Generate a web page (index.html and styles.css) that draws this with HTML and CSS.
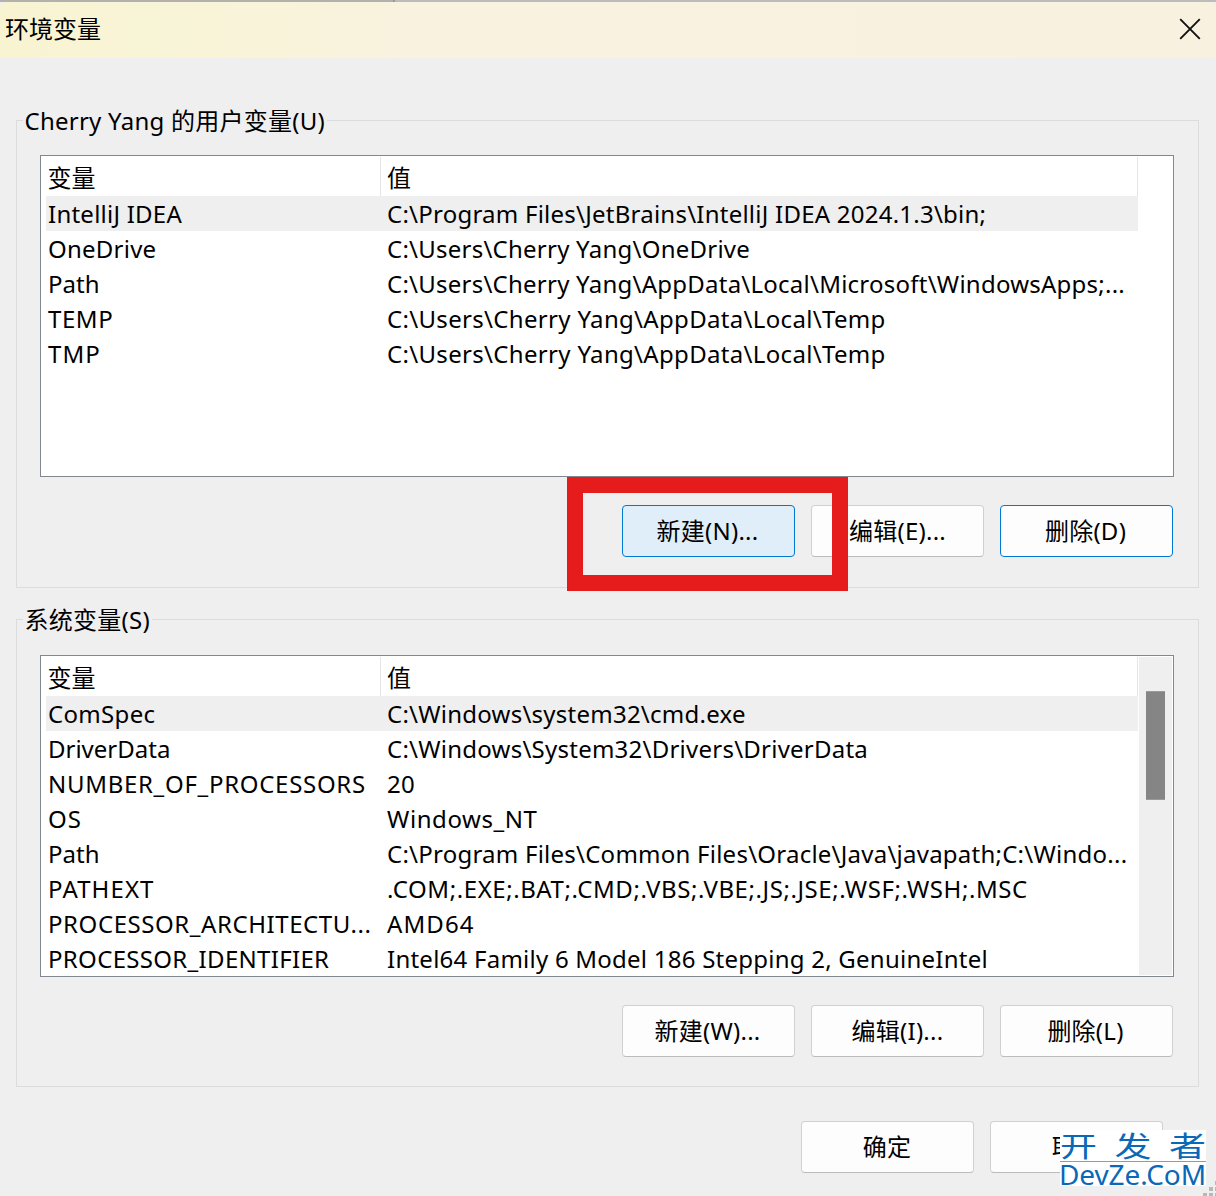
FILE: index.html
```html
<!DOCTYPE html>
<html lang="zh-CN">
<head>
<meta charset="utf-8">
<title>环境变量</title>
<link rel="stylesheet" href="styles.css">
</head>
<body>
<div class="dialog">
  <div class="backdrop-edge"></div>
  <header class="titlebar">
    <h1 class="title">环境变量</h1>
    <svg class="close" width="22" height="22" viewBox="0 0 22 22"><path d="M1.2 1.2 20.8 20.8M20.8 1.2 1.2 20.8" fill="none" stroke="#111" stroke-width="1.9"/></svg>
  </header>
  <main class="content">
    <section class="group">
      <h2 class="legend"><span>Cherry Yang 的用户变量(U)</span></h2>
      <div class="list">
        <div class="table">
          <div class="row head"><span class="name">变量</span><span class="value">值</span></div>
          <div class="row selected"><span class="name">IntelliJ IDEA</span><span class="value">C:\Program Files\JetBrains\IntelliJ IDEA 2024.1.3\bin;</span></div>
          <div class="row"><span class="name">OneDrive</span><span class="value">C:\Users\Cherry Yang\OneDrive</span></div>
          <div class="row"><span class="name tight">Path</span><span class="value">C:\Users\Cherry Yang\AppData\Local\Microsoft\WindowsApps;...</span></div>
          <div class="row"><span class="name caps">TEMP</span><span class="value loose">C:\Users\Cherry Yang\AppData\Local\Temp</span></div>
          <div class="row"><span class="name wide">TMP</span><span class="value loose">C:\Users\Cherry Yang\AppData\Local\Temp</span></div>
        </div>
      </div>
      <div class="actions">
        <button class="button hot">新建(N)...</button>
        <button class="button edit">编辑(E)...</button>
        <button class="button focused">删除(D)</button>
        <div class="highlight"></div>
      </div>
    </section>
    <section class="group system">
      <h2 class="legend"><span>系统变量(S)</span></h2>
      <div class="list">
        <div class="table">
          <div class="row head"><span class="name">变量</span><span class="value">值</span></div>
          <div class="row selected"><span class="name loose">ComSpec</span><span class="value">C:\Windows\system32\cmd.exe</span></div>
          <div class="row"><span class="name tight">DriverData</span><span class="value">C:\Windows\System32\Drivers\DriverData</span></div>
          <div class="row"><span class="name processors">NUMBER_OF_PROCESSORS</span><span class="value">20</span></div>
          <div class="row"><span class="name wide">OS</span><span class="value caps">Windows_NT</span></div>
          <div class="row"><span class="name tight">Path</span><span class="value">C:\Program Files\Common Files\Oracle\Java\javapath;C:\Windo...</span></div>
          <div class="row"><span class="name wide">PATHEXT</span><span class="value caps">.COM;.EXE;.BAT;.CMD;.VBS;.VBE;.JS;.JSE;.WSF;.WSH;.MSC</span></div>
          <div class="row"><span class="name caps">PROCESSOR_ARCHITECTU...</span><span class="value wide">AMD64</span></div>
          <div class="row"><span class="name loose">PROCESSOR_IDENTIFIER</span><span class="value">Intel64 Family 6 Model 186 Stepping 2, GenuineIntel</span></div>
        </div>
        <div class="scrollbar"><div class="thumb"></div></div>
      </div>
      <div class="actions">
        <button class="button">新建(W)...</button>
        <button class="button edit">编辑(I)...</button>
        <button class="button">删除(L)</button>
      </div>
    </section>
  </main>
  <footer class="footer">
    <button class="button">确定</button>
    <button class="button">取消</button>
  </footer>
  <div class="watermark">
    <div class="mark-top"><span>开</span><span>发</span><span>者</span></div>
    <div class="mark-bottom">DevZe.CoM</div>
  </div>
  <svg class="grip" width="13" height="15" viewBox="0 0 13 15"><path d="M12 0h4v4h-4zM6 6h4v4H6zM12 6h4v4h-4zM0 12h4v4H0zM6 12h4v4H6zM12 12h4v4h-4z" fill="#b8b8b8"/></svg>
</div>
</body>
</html>
```
FILE: styles.css
```css
* { box-sizing: border-box; }

body {
  margin: 0;
  font-family: "Noto Sans", "Noto Sans CJK SC", sans-serif;
  font-size: 24px;
  color: #000;
}

.dialog {
  position: relative;
  width: 1216px;
  height: 1196px;
  overflow: hidden;
  background: #efefef;
}

.backdrop-edge {
  height: 2px;
  background: linear-gradient(90deg, #b4b0ae 393px, #999 393px, #999 395px, #bcbcbc 395px);
}

.titlebar {
  display: flex;
  align-items: center;
  justify-content: space-between;
  height: 56px;
  padding: 0 15px 2px 5px;
  border-radius: 6px 6px 0 0;
  background: linear-gradient(90deg, #f8f4d2 0, #f9f4d8 200px, #f9f2df 420px, #f8f1e0 100%);
}

.title { margin: 0; font-size: 24px; font-weight: 400; line-height: 54px; }

.content {
  display: flex;
  flex-direction: column;
  gap: 31px;
  padding: 62px 17px 0 16px;
}

.group {
  height: 468px;
  padding: 0 24px 0 23px;
  border: 1px solid #dcdcdc;
}

.legend {
  display: flex;
  height: 34px;
  margin: 0 0 0 -17px;
  font-size: 24px;
  font-weight: 400;
  line-height: 34px;
  letter-spacing: 0.25px;
}

.system .legend { height: 35px; }

.legend span {
  height: 34px;
  margin-top: -17px;
  padding: 0 2px 0 1.5px;
  background: #efefef;
  white-space: nowrap;
}

.list {
  display: flex;
  justify-content: space-between;
  width: 1134px;
  height: 322px;
  padding: 1px 1px 1px 5px;
  border: 1px solid #828790;
  background: #fff;
}

.table { width: 1092px; overflow: hidden; }

.row {
  display: flex;
  height: 35px;
  line-height: 35px;
  letter-spacing: 0.24px;
  white-space: pre;
}

.head { height: 39px; line-height: 41px; letter-spacing: 0; }
.selected { background: #efefef; }

.name { width: 335px; padding-left: 2px; }
.head .name { padding-left: 1.5px; border-right: 1px solid #e5e5e5; }
.value { flex: 1; padding-left: 6px; }
.head .value { border-right: 1px solid #e5e5e5; }

.tight { letter-spacing: 0; }
.loose { letter-spacing: 0.32px; }
.caps { letter-spacing: 0.57px; }
.processors { letter-spacing: 0.7px; }
.wide { letter-spacing: 1.1px; }

.scrollbar {
  width: 33px;
  padding: 34px 0 0 7px;
  background: #efefef;
}

.thumb {
  width: 19px;
  height: 109px;
  border: solid #9a9a9a;
  border-width: 1px 0;
  background: #858585;
}

.actions {
  position: relative;
  display: flex;
  justify-content: flex-end;
  gap: 16px;
  margin: 28px 1px 0 0;
}

.button {
  width: 173px;
  height: 52px;
  padding: 0 2px 1px 0;
  border: 1px solid #d0d0d0;
  border-bottom-color: #bbb;
  border-radius: 4px;
  background: #fdfdfd;
  color: #000;
  font: inherit;
  line-height: 48px;
  letter-spacing: 0.25px;
}

.edit { padding-right: 0; }
.footer .button { padding: 0 1px 0 0; }

.hot { border-color: #0078d4; background: #e0eef9; }
.focused { border-color: #0078d4; }

.highlight {
  position: absolute;
  left: 527px;
  top: -28px;
  width: 281px;
  height: 114px;
  border: 16px solid #e61b1b;
}

.footer {
  display: flex;
  justify-content: flex-end;
  gap: 16px;
  padding: 34px 53px 0 0;
}

.watermark {
  position: absolute;
  left: 1060px;
  top: 1130px;
  width: 146px;
  height: 56px;
  background: #fff;
  color: #0968b8;
}

.mark-top {
  display: flex;
  justify-content: space-between;
  height: 32px;
  border-bottom: 1px solid #4cb2e0;
  font-family: "Noto Sans CJK SC", sans-serif;
  font-size: 37px;
  line-height: 28px;
}

.mark-top span { transform: scaleY(0.78); }

.mark-bottom {
  margin-left: -1px;
  font-size: 28px;
  line-height: 24px;
  letter-spacing: -0.1px;
  white-space: nowrap;
}

.grip { position: absolute; right: 0; bottom: 0; }
```
